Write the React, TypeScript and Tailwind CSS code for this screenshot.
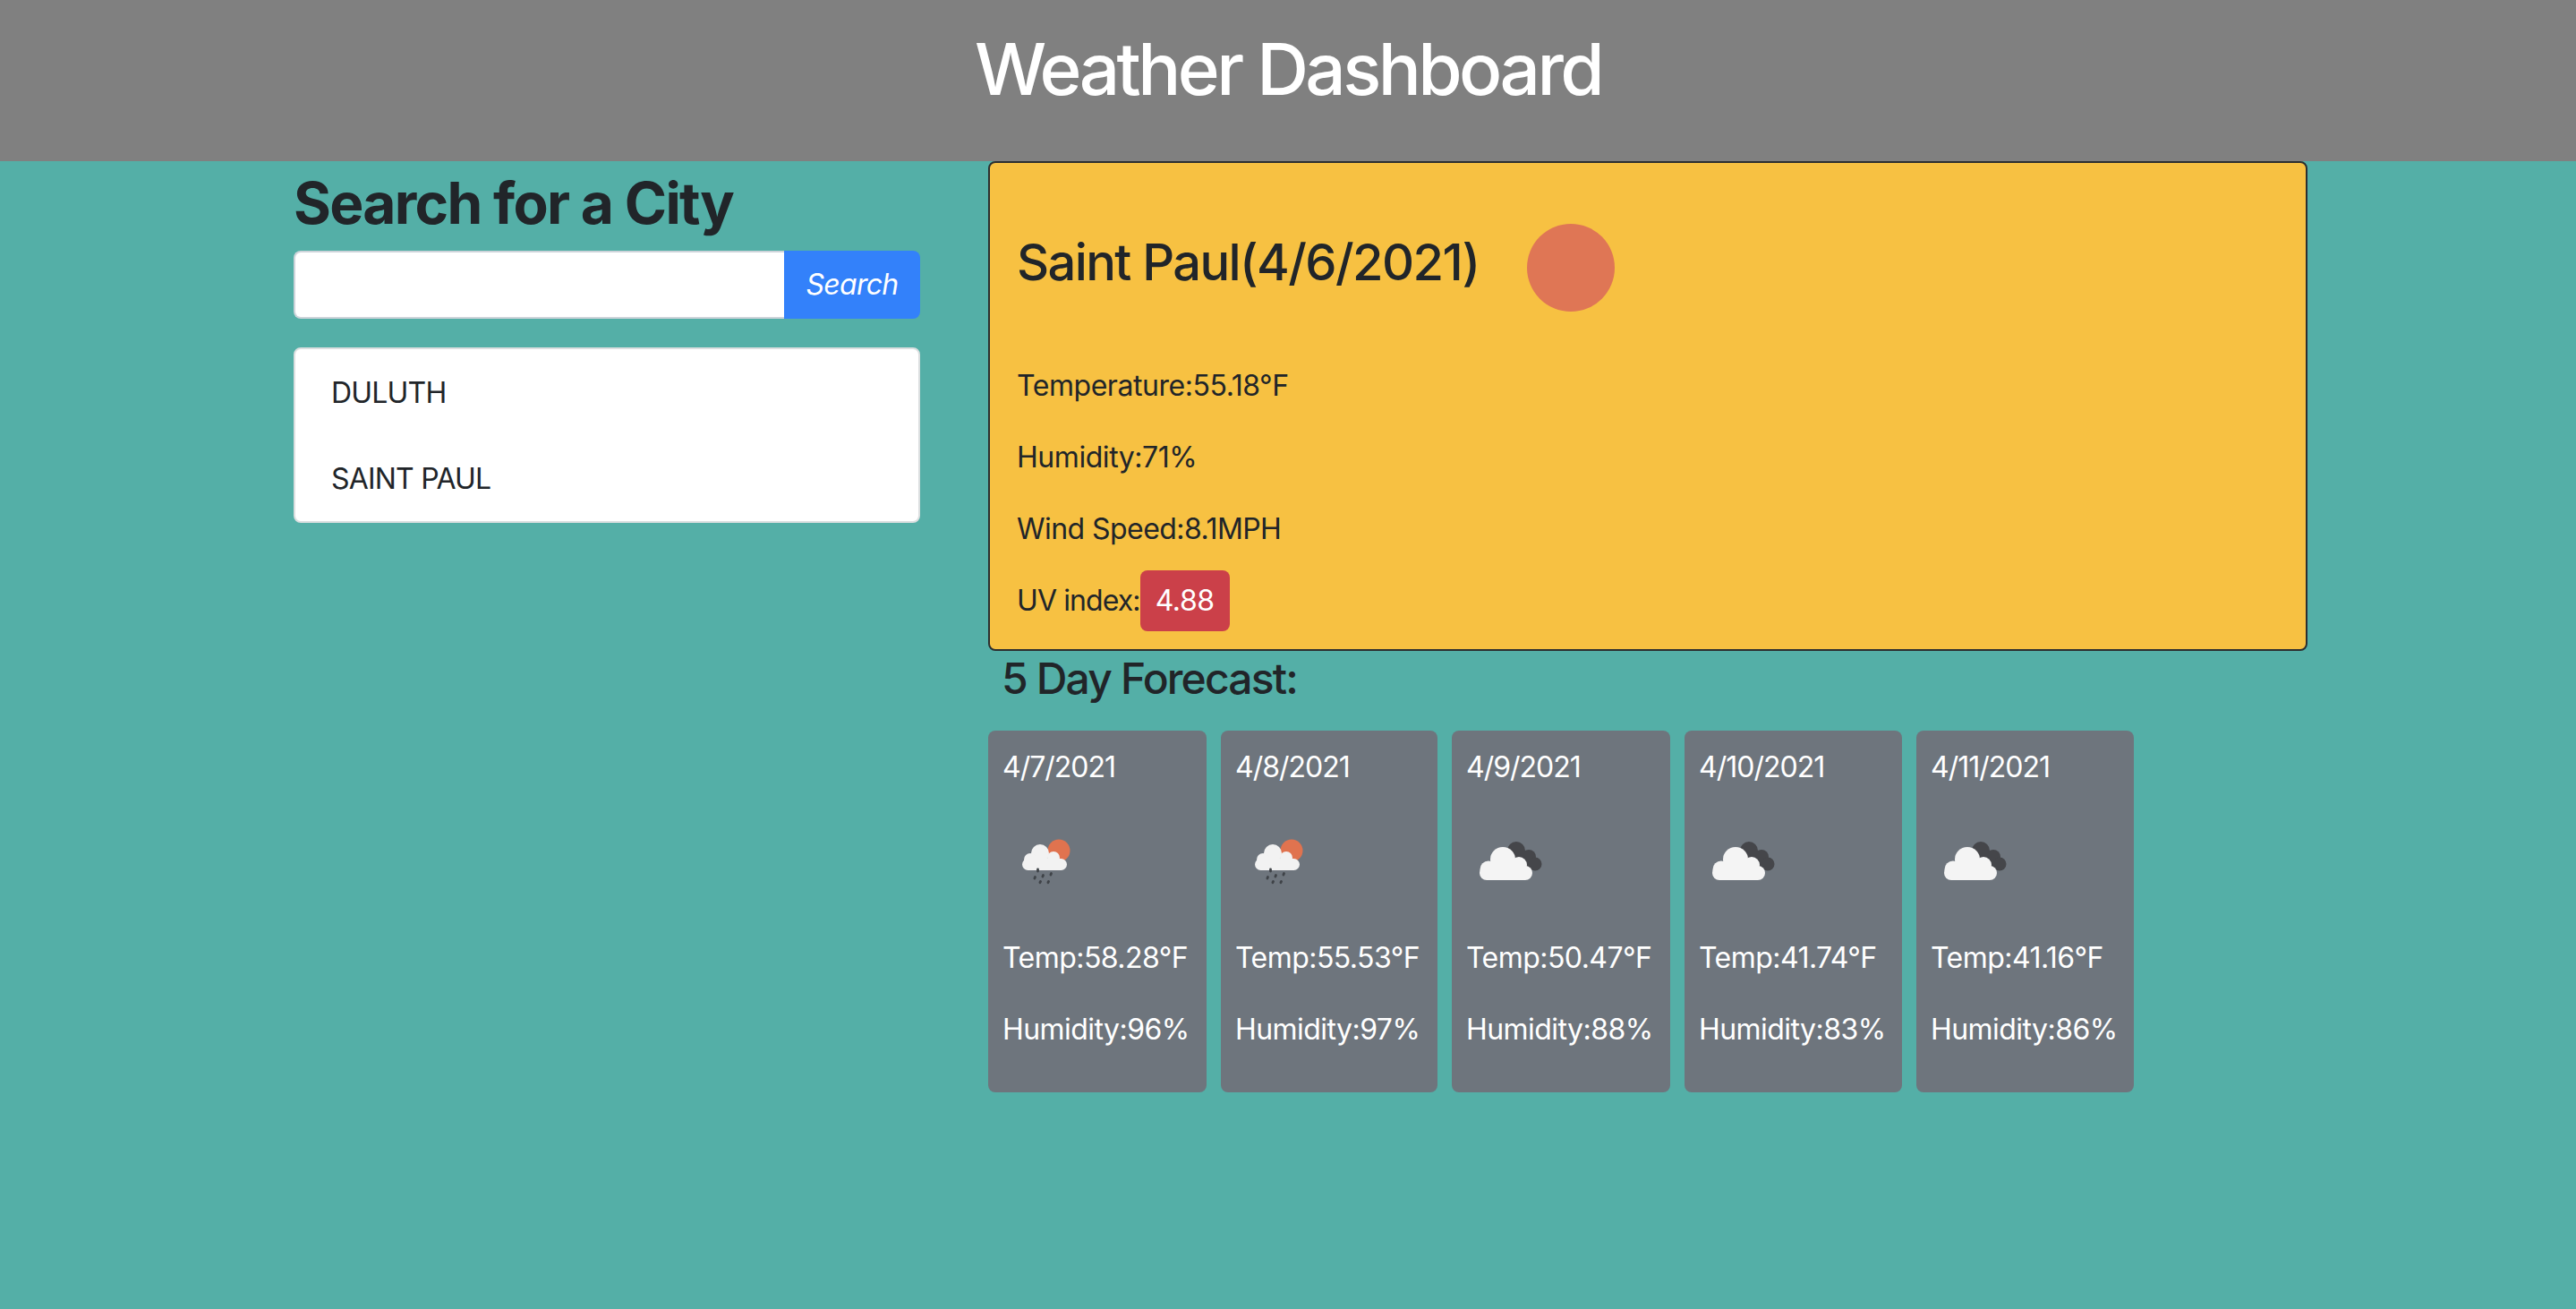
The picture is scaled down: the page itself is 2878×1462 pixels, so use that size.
const days = [
  { date: "4/7/2021", temp: "58.28", hum: "96", rain: true, width: "w-[244px]" },
  { date: "4/8/2021", temp: "55.53", hum: "97", rain: true, width: "w-[242px]" },
  { date: "4/9/2021", temp: "50.47", hum: "88", rain: false, width: "w-[244px]" },
  { date: "4/10/2021", temp: "41.74", hum: "83", rain: false, width: "w-[243px]" },
  { date: "4/11/2021", temp: "41.16", hum: "86", rain: false, width: "w-[243px]" },
];

function RainIcon() {
  return (
    <svg viewBox="0 0 100 100" className="w-[100px] h-[100px] blur-[0.6px]">
      <circle cx="63" cy="45" r="12.5" fill="#e0734f" />
      <g fill="#f2f2f2">
        <circle cx="42" cy="48" r="10" />
        <circle cx="57" cy="53" r="7" />
        <circle cx="31" cy="55" r="7" />
        <rect x="22" y="54" width="50" height="13" rx="6.5" />
      </g>
      <g stroke="#3f4348" strokeWidth="2.8" strokeLinecap="round">
        <path d="M39.5 66v2" />
        <path d="M36.5 74.5l-.6 1.6" />
        <path d="M45.5 72.5l-.6 1.6" />
        <path d="M54.5 70.5l-.6 1.6" />
        <path d="M42.5 79.5l-.6 1.2" />
        <path d="M51.5 79.5l-.6 1.2" />
      </g>
    </svg>
  );
}

function CloudIcon() {
  return (
    <svg viewBox="0 0 100 100" className="w-[100px] h-[100px] blur-[0.6px]">
      <g fill="#45464a">
        <circle cx="56" cy="45" r="10" />
        <circle cx="70" cy="52" r="8" />
        <circle cx="77" cy="60" r="7.5" />
        <rect x="50" y="45" width="22" height="20" />
      </g>
      <g fill="#f4f4f4">
        <circle cx="41" cy="55" r="14" />
        <circle cx="59" cy="61" r="9" />
        <circle cx="25" cy="66" r="9.5" />
        <rect x="15" y="62" width="59" height="16" rx="8" />
      </g>
    </svg>
  );
}

export default function App() {
  return (
    <div className="min-h-screen bg-[#54afa7] text-[#212529] font-['Inter',sans-serif] text-[32px] leading-[48px] tracking-[-0.45px]">
      <header className="h-[180px] bg-[#808080] pt-[29px] text-center">
        <h1 className="text-[80px] leading-[96px] font-[550] tracking-[-3.6px] text-white">Weather Dashboard</h1>
      </header>

      <main className="ml-[328px] flex w-[2250px] items-start gap-[76px]">
        <section className="w-[700px] shrink-0">
          <h2 className="pt-[8px] text-[64px] leading-[77px] font-bold tracking-[-1.7px]">Search for a City</h2>
          <div className="mt-[15px] flex h-[76px]">
            <input className="min-w-0 flex-1 rounded-l-lg border-2 border-r-0 border-[#ced4da] bg-white" />
            <button className="w-[152px] rounded-r-lg bg-[#3381fa] text-[32px] tracking-[-0.7px] text-white italic">Search</button>
          </div>
          <ul className="mt-[32px] rounded-lg border-2 border-[#dcdfe0] bg-white px-[40px] tracking-[-0.8px] text-[#212529]">
            <li className="pt-[25px] pb-[24px]">DULUTH</li>
            <li className="pt-[24px] pb-[23px]">SAINT PAUL</li>
          </ul>
        </section>

        <section className="min-w-0 flex-1">
          <div className="h-[547px] rounded-lg border-2 border-[#2c2f30] bg-[#f7c142] pl-[30px]">
            <div className="flex items-start pt-[78px]">
              <h3 className="text-[56px] leading-[67px] font-[550] tracking-[-1.6px]">Saint Paul(4/6/2021)</h3>
              <svg viewBox="0 0 100 100" className="-mt-[11px] ml-[52px] h-[100px] w-[100px]">
                <circle cx="50" cy="50" r="49" fill="#df7655" />
              </svg>
            </div>
            <div className="mt-[58px] flex flex-col gap-[32px]">
              <p>Temperature:55.18°F</p>
              <p>Humidity:71%</p>
              <p className="tracking-[-0.55px]">Wind Speed:8.1MPH</p>
              <p className="flex items-center">
                <span className="tracking-[-0.9px]">UV index:</span>
                <span className="-my-[10px] flex h-[68px] w-[100px] items-center justify-center rounded-lg bg-[#cb4049] text-white">4.88</span>
              </p>
            </div>
          </div>

          <h4 className="pl-[15px] pt-[2px] text-[48px] leading-[58px] font-[550] tracking-[-1.85px]">5 Day Forecast:</h4>

          <div className="mt-[29px] flex gap-[16px]">
            {days.map((d) => (
              <article key={d.date} className={`h-[404px] ${d.width} rounded-lg bg-[#6e757d] pl-[16px] pt-[17px] tracking-[-0.55px] text-white`}>
                <p className="tracking-[-1px]">{d.date}</p>
                <div className="mt-[24px] h-[100px]">{d.rain ? <RainIcon /> : <CloudIcon />}</div>
                <p className="mt-[41px]">Temp:{d.temp}°F</p>
                <p className="mt-[32px]">Humidity:{d.hum}%</p>
              </article>
            ))}
          </div>
        </section>
      </main>
    </div>
  );
}
